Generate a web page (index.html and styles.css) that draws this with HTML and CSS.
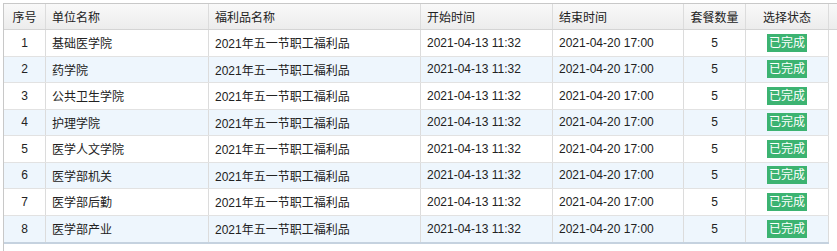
FILE: index.html
```html
<!DOCTYPE html>
<html lang="zh-CN">
<head>
<meta charset="utf-8">
<title>福利品选择状态</title>
<link rel="stylesheet" href="styles.css">
</head>
<body>
<div class="grid">
  <div class="row head">
    <div class="c center">序号</div>
    <div class="c">单位名称</div>
    <div class="c">福利品名称</div>
    <div class="c">开始时间</div>
    <div class="c">结束时间</div>
    <div class="c center">套餐数量</div>
    <div class="c center">选择状态</div>
    <div class="c filler"></div>
  </div>
  <div class="body">
    <div class="row">
      <div class="c center">1</div><div class="c">基础医学院</div><div class="c">2021年五一节职工福利品</div><div class="c">2021-04-13 11:32</div><div class="c">2021-04-20 17:00</div><div class="c center">5</div><div class="c center"><span class="badge">已完成</span></div>
    </div>
    <div class="row alt">
      <div class="c center">2</div><div class="c">药学院</div><div class="c">2021年五一节职工福利品</div><div class="c">2021-04-13 11:32</div><div class="c">2021-04-20 17:00</div><div class="c center">5</div><div class="c center"><span class="badge">已完成</span></div>
    </div>
    <div class="row">
      <div class="c center">3</div><div class="c">公共卫生学院</div><div class="c">2021年五一节职工福利品</div><div class="c">2021-04-13 11:32</div><div class="c">2021-04-20 17:00</div><div class="c center">5</div><div class="c center"><span class="badge">已完成</span></div>
    </div>
    <div class="row alt">
      <div class="c center">4</div><div class="c">护理学院</div><div class="c">2021年五一节职工福利品</div><div class="c">2021-04-13 11:32</div><div class="c">2021-04-20 17:00</div><div class="c center">5</div><div class="c center"><span class="badge">已完成</span></div>
    </div>
    <div class="row">
      <div class="c center">5</div><div class="c">医学人文学院</div><div class="c">2021年五一节职工福利品</div><div class="c">2021-04-13 11:32</div><div class="c">2021-04-20 17:00</div><div class="c center">5</div><div class="c center"><span class="badge">已完成</span></div>
    </div>
    <div class="row alt">
      <div class="c center">6</div><div class="c">医学部机关</div><div class="c">2021年五一节职工福利品</div><div class="c">2021-04-13 11:32</div><div class="c">2021-04-20 17:00</div><div class="c center">5</div><div class="c center"><span class="badge">已完成</span></div>
    </div>
    <div class="row">
      <div class="c center">7</div><div class="c">医学部后勤</div><div class="c">2021年五一节职工福利品</div><div class="c">2021-04-13 11:32</div><div class="c">2021-04-20 17:00</div><div class="c center">5</div><div class="c center"><span class="badge">已完成</span></div>
    </div>
    <div class="row alt last">
      <div class="c center">8</div><div class="c">医学部产业</div><div class="c">2021年五一节职工福利品</div><div class="c">2021-04-13 11:32</div><div class="c">2021-04-20 17:00</div><div class="c center">5</div><div class="c center"><span class="badge">已完成</span></div>
    </div>
  </div>
</div>
</body>
</html>
```
FILE: styles.css
```css
html, body {
  margin: 0;
  padding: 0;
  background: #fff;
  overflow: hidden;
}
body {
  padding: 3px 0 0 3px;
  font-family: "Liberation Sans", "Noto Sans CJK SC", sans-serif;
  font-size: 12px;
  color: #222;
}
.grid {
  width: 860px;
  height: 260px;
  border-left: 1px solid #c8c8c8;
  border-top: 1px solid #c8c8c8;
  box-sizing: border-box;
}
.row {
  display: grid;
  grid-template-columns: 42px 163px 212px 132px 131px 62px 83px;
  height: 26.5px;
  box-sizing: border-box;
  border-bottom: 1px solid #e2e2e2;
}
.row.head {
  grid-template-columns: 42px 163px 212px 132px 131px 62px 83px 1fr;
  height: 26px;
  background: linear-gradient(#f9f9f9, #ececec);
  border-bottom: 1px solid #d4d4d4;
}
.body {
  width: 825px;
  border-bottom: 2px solid #c5d2df;
}
.body .row { width: 825px; }
.row.alt { background: #eef6fd; }
.row.last { border-bottom: none; }
.c {
  display: flex;
  align-items: center;
  padding: 0 6px;
  border-right: 1px solid #dcdcdc;
  box-sizing: border-box;
  white-space: nowrap;
  overflow: hidden;
}
.c.center { justify-content: center; padding: 0; }
.c.filler { border-right: none; }
.badge {
  display: inline-block;
  background: #3cb371;
  color: #fff;
  font-size: 12px;
  line-height: 18px;
  padding: 0 2px;
}
```
